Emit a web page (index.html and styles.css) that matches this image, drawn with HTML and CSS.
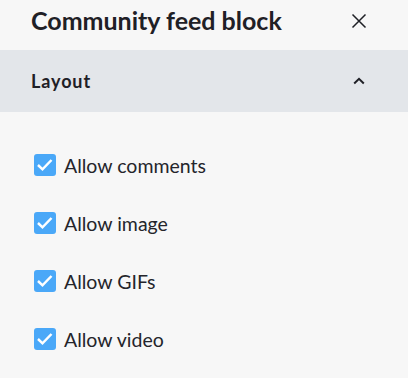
FILE: index.html
```html
<!DOCTYPE html>
<html>
<head>
<meta charset="utf-8">
<link rel="stylesheet" href="styles.css">
</head>
<body>
<div class="panel">
  <header class="head">
    <h1 class="title">Community feed block</h1>
    <button class="close" aria-label="Close">
      <svg width="16" height="16" viewBox="0 0 16 16"><path d="M1.5 1.5 L14.5 14.5 M14.5 1.5 L1.5 14.5" stroke="#1f2026" stroke-width="1.5" fill="none"/></svg>
    </button>
  </header>
  <div class="section">
    <span class="section-title">Layout</span>
    <svg class="chev" width="12" height="8" viewBox="0 0 12 8"><path d="M1.2 6.5 L6 1.8 L10.8 6.5" stroke="#1f2026" stroke-width="2" fill="none"/></svg>
  </div>
  <ul class="options">
    <li class="opt"><span class="cb"><svg width="22" height="22" viewBox="0 0 22 22"><path d="M4 11 L8.5 15.3 L17.5 6" stroke="#fff" stroke-width="2.5" fill="none"/></svg></span>Allow comments</li>
    <li class="opt"><span class="cb"><svg width="22" height="22" viewBox="0 0 22 22"><path d="M4 11 L8.5 15.3 L17.5 6" stroke="#fff" stroke-width="2.5" fill="none"/></svg></span>Allow image</li>
    <li class="opt"><span class="cb"><svg width="22" height="22" viewBox="0 0 22 22"><path d="M4 11 L8.5 15.3 L17.5 6" stroke="#fff" stroke-width="2.5" fill="none"/></svg></span>Allow GIFs</li>
    <li class="opt"><span class="cb"><svg width="22" height="22" viewBox="0 0 22 22"><path d="M4 11 L8.5 15.3 L17.5 6" stroke="#fff" stroke-width="2.5" fill="none"/></svg></span>Allow video</li>
  </ul>
</div>
</body>
</html>
```

FILE: styles.css
```css
html, body { margin: 0; padding: 0; }
body {
  background: #f7f7f7;
  font-family: Lato, "Noto Sans", sans-serif;
  color: #1f2026;
  width: 408px;
  height: 378px;
  overflow: hidden;
}
.head {
  height: 40px;
  padding: 0 41px 10px 31px;
  display: flex;
  align-items: center;
  justify-content: space-between;
}
.title {
  margin: 0;
  font-size: 25px;
  font-weight: 700;
  line-height: 30px;
}
.close {
  border: 0;
  background: none;
  padding: 0;
  margin-top: 2px;
  width: 16px;
  height: 16px;
  display: flex;
}
.section {
  height: 62px;
  background: #e3e6ea;
  display: flex;
  align-items: center;
  justify-content: space-between;
  padding: 0 43px 0 31px;
}
.section-title {
  font-size: 18px;
  font-weight: 700;
  letter-spacing: 0.9px;
}
.options {
  list-style: none;
  margin: 0;
  padding: 42px 0 0 34px;
  display: flex;
  flex-direction: column;
  gap: 36px;
}
.opt {
  display: flex;
  align-items: center;
  gap: 8px;
  font-size: 19.5px;
  height: 22px;
  color: #24252b;
}
.cb {
  width: 22px;
  height: 22px;
  border-radius: 3px;
  background: #4aa8f8;
  display: flex;
}
```
